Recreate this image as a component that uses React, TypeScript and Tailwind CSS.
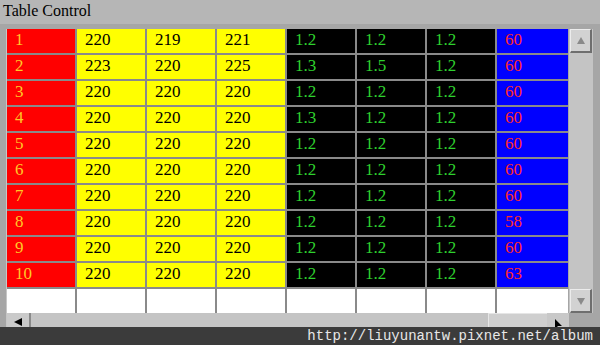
const rows = [
  ["1", "220", "219", "221", "1.2", "1.2", "1.2", "60"],
  ["2", "223", "220", "225", "1.3", "1.5", "1.2", "60"],
  ["3", "220", "220", "220", "1.2", "1.2", "1.2", "60"],
  ["4", "220", "220", "220", "1.3", "1.2", "1.2", "60"],
  ["5", "220", "220", "220", "1.2", "1.2", "1.2", "60"],
  ["6", "220", "220", "220", "1.2", "1.2", "1.2", "60"],
  ["7", "220", "220", "220", "1.2", "1.2", "1.2", "60"],
  ["8", "220", "220", "220", "1.2", "1.2", "1.2", "58"],
  ["9", "220", "220", "220", "1.2", "1.2", "1.2", "60"],
  ["10", "220", "220", "220", "1.2", "1.2", "1.2", "63"]
];

// colour per column: background + text
const colStyles = [
  "bg-[#ff0000] text-[#ffc828]",
  "bg-[#ffff00] text-black",
  "bg-[#ffff00] text-black",
  "bg-[#ffff00] text-black",
  "bg-black text-[#2ed12e]",
  "bg-black text-[#2ed12e]",
  "bg-black text-[#2ed12e]",
  "bg-[#0000ff] text-[#ff2a2a]"
];

const ScrollButton = ({ children }: { children: React.ReactNode }) => (
  <div className="flex h-[24px] w-[22px] items-center justify-center border-t border-l border-t-[#ececec] border-l-[#ececec] border-r-2 border-b-2 border-r-[#6e6e6e] border-b-[#6e6e6e] bg-[#d2d2d2]">
    {children}
  </div>
);

const App = () => {
  return (
    <div className="relative h-[345px] w-[600px] overflow-hidden bg-[#b6b6b6] font-[Liberation_Serif,serif]">
      <div className="h-[24px] pl-[3px] text-[16px] leading-[22px] text-black">Table Control</div>

      <div className="flex h-[321px] flex-col bg-[#a6a6a6] pt-[5px] pl-[6px]">
        <div className="flex border-l border-[#c6c6c6]">
          <div className="grid grid-cols-[68px_68px_68px_68px_68px_68px_68px_71px] gap-[2px] bg-[#8a8a8a]">
            {rows.map((row, r) =>
              row.map((val, c) => (
                <div
                  key={`${r}-${c}`}
                  className={`h-[24px] pl-[8px] text-[17px] leading-[22px] ${colStyles[c]}`}
                >
                  {val}
                </div>
              ))
            )}
            {colStyles.map((_, c) => (
              <div key={`blank-${c}`} className="h-[24px] bg-white" />
            ))}
          </div>

          <div className="ml-[1px] flex h-[284px] w-[24px] flex-col justify-between bg-[#c4c4c4] pl-[1px]">
            <ScrollButton>
              <svg width="10" height="10" viewBox="0 0 10 10">
                <path d="M5 1 L9 8 L1 8 Z" fill="#8a8a8a" />
              </svg>
            </ScrollButton>
            <ScrollButton>
              <svg width="10" height="10" viewBox="0 0 10 10">
                <path d="M1 2 L9 2 L5 9 Z" fill="#8a8a8a" />
              </svg>
            </ScrollButton>
          </div>
        </div>

        <div className="flex h-[32px] w-[563px] border-l border-[#c6c6c6] bg-[#c4c4c4]">
          <div className="flex h-[32px] w-[24px] items-start justify-center border-r-2 border-[#8a8a8a] bg-[#cacaca] pt-[4px]">
            <svg width="10" height="10" viewBox="0 0 10 10">
              <path d="M1 5 L9 1 L9 9 Z" fill="#000" />
            </svg>
          </div>
          <div className="ml-[457px] h-[32px] w-[60px] border-t border-l border-[#e6e6e6] bg-[#cfcfcf]" />
          <div className="flex h-[32px] w-[22px] items-start justify-center bg-[#c8c8c8] pt-[5px]">
            <svg width="10" height="12" viewBox="0 0 10 12">
              <path d="M2 1 L9 8 L5 8 L2 11 Z" fill="#000" />
            </svg>
          </div>
        </div>
      </div>

      {/* watermark strip over the bottom edge */}
      <div className="absolute right-0 bottom-0 left-0 h-[18px] bg-[#3b3b3b] pr-[7px] text-right font-[Liberation_Mono,monospace] text-[14px] leading-[18px] text-[#e8e8e8]">
        http://liuyunantw.pixnet.net/album
      </div>
    </div>
  );
};

export default App;
